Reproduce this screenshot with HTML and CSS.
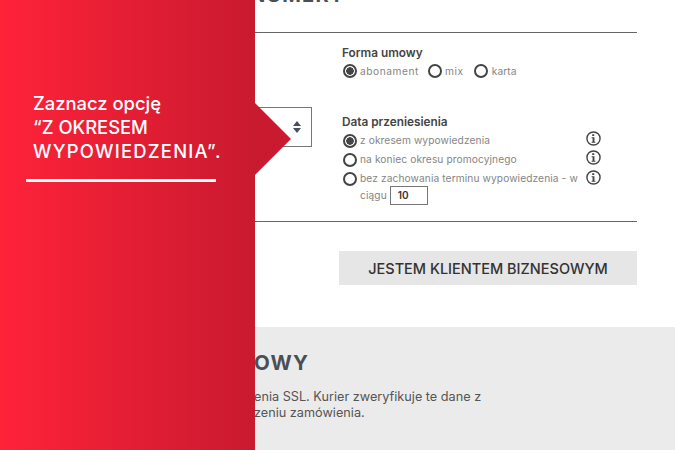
FILE: index.html
```html
<!DOCTYPE html>
<html lang="pl">
<head>
<meta charset="utf-8">
<title>Numery</title>
<link rel="stylesheet" href="styles.css">
</head>
<body>
<div class="page">
  <main class="main">
    <header class="top"><h2 class="title">NUMERY</h2></header>
    <section class="form">
      <div class="left">
        <div class="select"><svg class="updown" viewBox="0 0 8 12" width="8" height="12"><path d="M4 0 8 5H0zM4 12 0 7h8z"/></svg></div>
      </div>
      <div class="right">
        <h3 class="label first">Forma umowy</h3>
        <div class="row-inline">
          <span class="radio on"></span><span class="opt opt-a">abonament</span>
          <span class="radio"></span><span class="opt opt-m">mix</span>
          <span class="radio"></span><span class="opt opt-k">karta</span>
        </div>
        <h3 class="label second">Data przeniesienia</h3>
        <div class="choice first-choice">
          <span class="radio on"></span><span class="opt grow">z okresem wypowiedzenia</span>
          <svg class="info" viewBox="0 0 16 16" width="15" height="15"><circle cx="8" cy="8" r="7" fill="none" stroke="#444" stroke-width="1.5"/><path d="M6.6 3.4h2.2v2H6.6zM6 6.6h3v4.8h1v1.2H6v-1.2h1V7.8H6z" fill="#444"/></svg>
        </div>
        <div class="choice">
          <span class="radio"></span><span class="opt grow">na koniec okresu promocyjnego</span>
          <svg class="info" viewBox="0 0 16 16" width="15" height="15"><circle cx="8" cy="8" r="7" fill="none" stroke="#444" stroke-width="1.5"/><path d="M6.6 3.4h2.2v2H6.6zM6 6.6h3v4.8h1v1.2H6v-1.2h1V7.8H6z" fill="#444"/></svg>
        </div>
        <div class="choice multi">
          <span class="radio"></span>
          <div class="opt grow wrap">
            <div>bez zachowania terminu wypowiedzenia - w</div>
            <div class="line-two"><span>ciągu</span><span class="num">10</span></div>
          </div>
          <svg class="info" viewBox="0 0 16 16" width="15" height="15"><circle cx="8" cy="8" r="7" fill="none" stroke="#444" stroke-width="1.5"/><path d="M6.6 3.4h2.2v2H6.6zM6 6.6h3v4.8h1v1.2H6v-1.2h1V7.8H6z" fill="#444"/></svg>
        </div>
      </div>
    </section>
    <div class="actions"><button class="biz">JESTEM KLIENTEM BIZNESOWYM</button></div>
  </main>
  <section class="grey">
    <h2 class="grey-title">OWY</h2>
    <p class="grey-text">enia SSL. Kurier zweryfikuje te dane z<br>zeniu zamówienia.</p>
  </section>
  <aside class="callout">
    <p class="callout-text">Zaznacz opcję<br>“Z OKRESEM<br><span class="wide">WYPOWIEDZENIA”.</span></p>
    <div class="callout-line"></div>
  </aside>
</div>
</body>
</html>
```
FILE: styles.css
```css
* { box-sizing: border-box; }
html, body { margin: 0; padding: 0; background: #fff; }
body { font-family: Inter, "Open Sans", "Liberation Sans", sans-serif; color: #444; overflow: hidden; }
.page { position: relative; width: 675px; height: 450px; overflow: hidden; display: flex; flex-direction: column; }
.main { height: 327px; padding: 0 38px 0 200px; }
.top { height: 33px; border-bottom: 1px solid #666; display: flex; align-items: flex-end; justify-content: flex-end; padding: 0 292px 27px 0; overflow: hidden; }
.title { margin: 0; font-size: 20px; line-height: 20px; font-weight: 700; letter-spacing: 1.2px; color: #4a4f55; white-space: nowrap; }
.form { height: 189px; border-bottom: 1px solid #666; display: flex; }
.left { width: 112px; padding-top: 74px; }
.select { height: 40px; border: 1px solid #777; display: flex; align-items: center; justify-content: flex-end; padding-right: 10px; }
.updown { fill: #44505c; }
.right { margin-left: 30px; width: 295px; }
.label { margin: 0; font-size: 11.8px; line-height: 14px; font-weight: 600; color: #444; }
.first { padding-top: 13px; }
.second { margin-top: 36px; }
.row-inline { display: flex; align-items: center; height: 16px; margin-top: 3px; padding-left: 1px; }
.radio { width: 14px; height: 14px; flex: none; border: 2px solid #444; border-radius: 50%; background: #fff; }
.radio.on { background: radial-gradient(circle, #444 0 3.5px, #fff 4px); }
.opt { font-size: 10.2px; line-height: 15px; color: #858585; margin-left: 3px; letter-spacing: .1px; }
.opt-a { margin-right: 9px; letter-spacing: .55px; }
.opt-m { margin-right: 10px; letter-spacing: .6px; }
.opt-k { margin-left: 4px; }
.choice { display: flex; align-items: center; height: 19px; padding-left: 1px; }
.first-choice { margin-top: 2px; }
.grow { flex: 1; }
.wrap { line-height: 17px; }
.multi { align-items: flex-start; height: auto; padding-top: 1px; }
.multi .radio { margin-top: 2px; }
.info { flex: none; margin: -4px 36px 0 0; }
.multi .info { margin-top: 0; }
.line-two { display: flex; align-items: center; height: 17px; gap: 3px; }
.num { width: 38px; height: 19px; flex: none; margin-top: -1px; border: 1px solid #777; color: #333; font-weight: 600; font-size: 10px; line-height: 17px; padding-left: 7px; }
.actions { padding: 29px 0 0 139px; }
.biz { display: block; width: 298px; height: 34px; border: 0; padding: 0; background: #e6e6e6; color: #333; font: 500 14.5px Inter, sans-serif; }
.grey { flex: 1; background: #ebebeb; padding: 24px 0 0 254px; }
.grey-title { margin: 0; font-size: 20.5px; line-height: 24px; font-weight: 700; letter-spacing: 1.2px; color: #4a4f55; }
.grey-text { margin: 14px 0 0; font-size: 12.7px; line-height: 15.5px; color: #555; white-space: nowrap; }
.callout { position: absolute; left: 0; top: 0; width: 291px; height: 450px; padding: 91px 0 0 26px; color: #fff;
  background: linear-gradient(90deg, #ff2239 0, #c91a2f 255px, #c91a2f 291px);
  clip-path: polygon(0 0, 255px 0, 255px 103px, 291px 139px, 255px 175px, 255px 100%, 0 100%); }
.callout-text { margin: 0 0 0 7px; font-size: 18.4px; line-height: 24px; font-weight: 500; white-space: nowrap; }
.wide { letter-spacing: 1.25px; }
.callout-line { width: 190px; height: 3px; background: #fff; margin-top: 16px; }
```
